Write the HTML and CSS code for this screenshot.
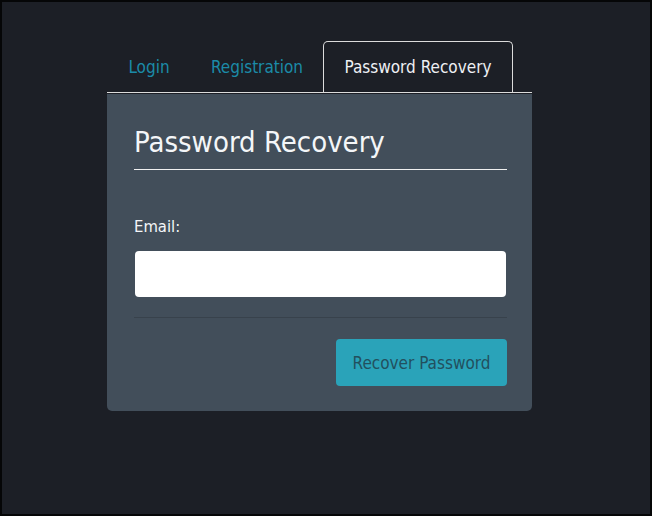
FILE: index.html
```html
<!DOCTYPE html>
<html lang="en">
<head>
    <meta charset="UTF-8">
    <meta name="viewport" content="width=device-width, initial-scale=1.0">
    <title>Password Recovery</title>
    <link rel="stylesheet" href="styles.css">
</head>
<body>

    <main class="frame">

        <section class="account">
            <nav class="tabs">
                <a href="#" class="tab tab-login">Login</a>
                <a href="#" class="tab tab-register">Registration</a>
                <a href="#" class="tab tab-recover active">Password Recovery</a>
            </nav>

            <form class="card">
                <h2>Password Recovery</h2>

                <label for="email">Email:</label>
                <input id="email" type="email">

                <hr>

                <div class="actions">
                    <button type="button">Recover Password</button>
                </div>
            </form>
        </section>

    </main>

</body>
</html>
```

FILE: styles.css
```css
body {
    margin: 0;
    font-family: "DejaVu Sans Condensed", "DejaVu Sans", sans-serif;
}

.frame {
    box-sizing: border-box;
    height: 516px;
    border: 2px solid #050607;
    background-color: #1c1f26;
    padding-top: 39px;
}

.account {
    width: 425px;
    margin-left: 105px;
}

.tabs {
    display: flex;
    border-bottom: 1px solid #dcdcdc;
}

.tab {
    box-sizing: border-box;
    height: 51px;
    line-height: 51px;
    text-align: center;
    font-size: 17px;
    color: #1b8ba8;
    text-decoration: none;
    border: 1px solid transparent;
    border-bottom: none;
    border-radius: 5px 5px 0 0;
}

.tab-login { width: 84px; }
.tab-register { width: 132px; }
.tab-recover { width: 190px; }

.tab.active {
    color: #eef0f4;
    border-color: #dcdcdc;
}

.card {
    background-color: #424e5a;
    border-radius: 0 0 5px 5px;
    padding: 28px 25px 25px 27px;
    margin-top: 1px;
}

.card h2 {
    margin: 0;
    font-size: 29px;
    line-height: 40px;
    font-weight: normal;
    color: #f4f6f8;
    padding-bottom: 7px;
    border-bottom: 1px solid #f0f0f0;
}

.card label {
    display: block;
    margin-top: 46px;
    font-size: 16.5px;
    line-height: 22px;
    color: #f4f6f8;
}

.card input {
    display: block;
    box-sizing: border-box;
    width: 371px;
    height: 46px;
    margin: 13px 0 0 1px;
    border: none;
    border-radius: 4px;
    background-color: #fff;
}

.card hr {
    border: none;
    border-top: 1px solid #38424c;
    margin: 20px 0 0;
}

.actions {
    display: flex;
    justify-content: flex-end;
    margin-top: 21px;
}

.actions button {
    width: 171px;
    height: 47px;
    border: none;
    border-radius: 4px;
    background-color: #2aa3b9;
    color: #22505e;
    font-family: inherit;
    font-size: 17px;
    white-space: nowrap;
}
```
